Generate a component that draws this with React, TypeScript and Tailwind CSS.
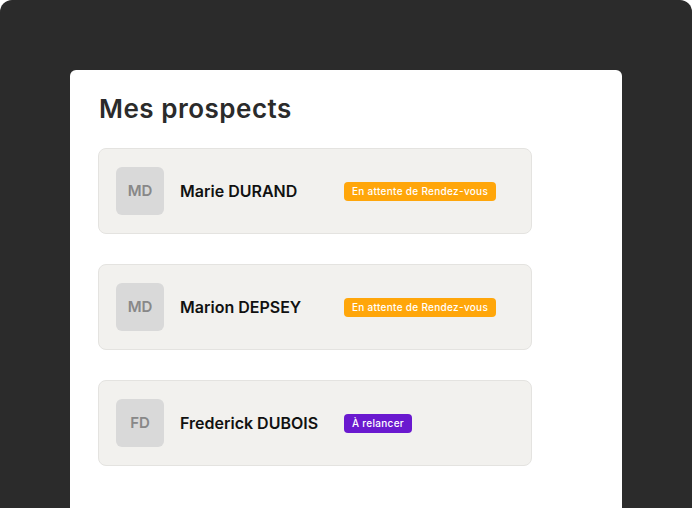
import React from "react";

const prospects = [
  { initials: "MD", name: "Marie DURAND", status: "En attente de Rendez-vous", color: "orange" },
  { initials: "MD", name: "Marion DEPSEY", status: "En attente de Rendez-vous", color: "orange" },
  { initials: "FD", name: "Frederick DUBOIS", status: "À relancer", color: "purple" },
];

export default function App() {
  return (
    <div
      className="w-[692px] h-[508px] bg-[#2b2b2b] rounded-t-[12px] overflow-hidden pl-[70px] pt-[70px]"
      style={{ fontFamily: "Inter, 'Noto Sans', sans-serif" }}
    >
      <div className="w-[552px] h-[438px] bg-white rounded-t-[6px] pl-[28px] pt-[22px]">
        <h1 className="text-[26px] leading-[34px] font-semibold text-[#2b2b2b] pl-[1px] tracking-[0.5px]">Mes prospects</h1>
        <div className="mt-[22px] flex flex-col gap-[30px]">
          {prospects.map((p, i) => (
            <div
              key={i}
              className="w-[434px] h-[86px] bg-[#f2f1ee] border border-[#e4e3e0] rounded-[8px] flex items-center pl-[17px]"
            >
              <div className="w-[48px] h-[48px] rounded-[6px] bg-[#d9d9d9] flex items-center justify-center text-[15px] font-semibold text-[#888888]">
                {p.initials}
              </div>
              <div className="w-[164px] ml-[16px] text-[16px] font-semibold text-[#111]">{p.name}</div>
              <div
                className={
                  "h-[19px] px-[8px] rounded-[4px] flex items-center text-[10px] font-medium text-white tracking-[0.3px] " +
                  (p.color === "orange" ? "bg-[#ffa60a]" : "bg-[#6a19cf]")
                }
              >
                {p.status}
              </div>
            </div>
          ))}
        </div>
      </div>
    </div>
  );
}
